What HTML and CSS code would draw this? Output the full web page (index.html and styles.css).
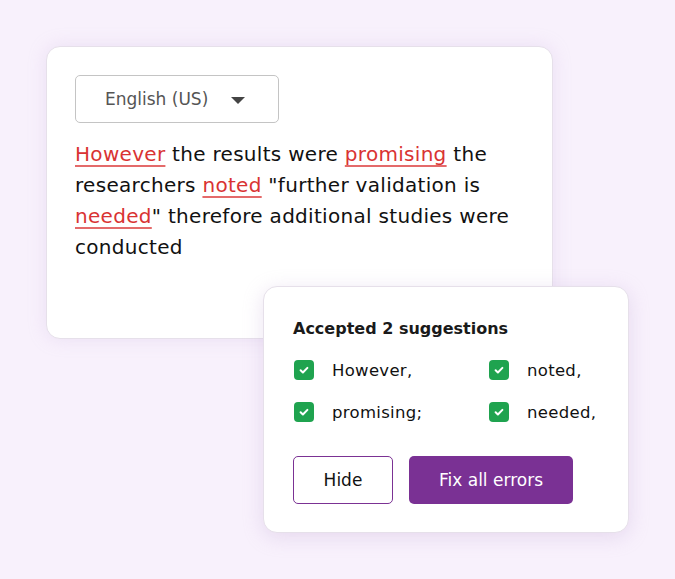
FILE: index.html
```html
<!DOCTYPE html>
<html>
<head>
<meta charset="utf-8">
<link rel="stylesheet" href="styles.css">
</head>
<body>
<div class="stage">
  <div class="editor">
    <div class="dropdown">
      <span class="lang">English (US)</span>
      <span class="caret"></span>
    </div>
    <p class="text"><span class="err">However</span> the results were <span class="err">promising</span> the researchers <span class="err">noted</span> "further validation is <span class="err">needed</span>" therefore additional studies were conducted</p>
  </div>
  <div class="panel">
    <div class="title">Accepted 2 suggestions</div>
    <div class="grid">
      <div class="item"><span class="check"><svg viewBox="0 0 20 20" width="20" height="20"><path d="M6.6 10.3 L8.9 12.5 L13.4 7.9" fill="none" stroke="#fff" stroke-width="2" stroke-linecap="round" stroke-linejoin="round"/></svg></span><span>However,</span></div>
      <div class="item"><span class="check"><svg viewBox="0 0 20 20" width="20" height="20"><path d="M6.6 10.3 L8.9 12.5 L13.4 7.9" fill="none" stroke="#fff" stroke-width="2" stroke-linecap="round" stroke-linejoin="round"/></svg></span><span>noted,</span></div>
      <div class="item"><span class="check"><svg viewBox="0 0 20 20" width="20" height="20"><path d="M6.6 10.3 L8.9 12.5 L13.4 7.9" fill="none" stroke="#fff" stroke-width="2" stroke-linecap="round" stroke-linejoin="round"/></svg></span><span>promising;</span></div>
      <div class="item"><span class="check"><svg viewBox="0 0 20 20" width="20" height="20"><path d="M6.6 10.3 L8.9 12.5 L13.4 7.9" fill="none" stroke="#fff" stroke-width="2" stroke-linecap="round" stroke-linejoin="round"/></svg></span><span>needed,</span></div>
    </div>
    <div class="buttons">
      <button class="btn hide">Hide</button>
      <button class="btn fix">Fix all errors</button>
    </div>
  </div>
</div>
</body>
</html>
```
FILE: styles.css
```css
* { box-sizing: border-box; }
html, body { margin: 0; padding: 0; }
body {
  width: 675px;
  height: 579px;
  background: #f8f1fc;
  font-family: "DejaVu Sans", "Open Sans", sans-serif;
  color: #111;
  overflow: hidden;
}
.stage {
  position: relative;
  padding: 46px 0 0 46px;
  height: 579px;
}
.editor {
  width: 507px;
  height: 293px;
  background: #fff;
  border: 1px solid #e6e0ea;
  border-radius: 14px;
  box-shadow: 0 0 18px rgba(200, 170, 220, 0.25);
  padding: 28px 28px 0 28px;
}
.dropdown {
  width: 204px;
  height: 48px;
  border: 1.5px solid #c4c4c4;
  border-radius: 5px;
  display: flex;
  align-items: center;
  padding-left: 29px;
}
.lang {
  font-size: 17px;
  color: #555;
}
.caret {
  margin-left: 23px;
  width: 0;
  height: 0;
  border-left: 7px solid transparent;
  border-right: 7px solid transparent;
  border-top: 7px solid #444;
  margin-top: 2px;
}
.text {
  margin: 16px 0 0 0;
  font-size: 20px;
  letter-spacing: 0.3px;
  line-height: 31px;
  color: #111;
  width: 455px;
}
.err {
  color: #d93333;
  text-decoration: underline;
  text-decoration-color: #e46a6a;
  text-decoration-thickness: 2px;
  text-underline-offset: 4px;
}
.panel {
  position: absolute;
  left: 263px;
  top: 286px;
  width: 366px;
  height: 247px;
  background: #fff;
  border: 1px solid #e6e0ea;
  border-radius: 14px;
  box-shadow: 0 4px 20px rgba(190, 160, 210, 0.3);
  padding: 30px 0 0 29px;
}
.title {
  font-size: 16px;
  font-weight: 600;
  line-height: 24px;
  color: #1a1a1a;
}
.grid {
  margin-top: 19px;
  display: grid;
  grid-template-columns: 195px auto;
  row-gap: 22px;
}
.item {
  display: flex;
  align-items: center;
  height: 20px;
  font-size: 16.5px;
  letter-spacing: 0.3px;
  color: #111;
}
.check {
  width: 20px;
  height: 20px;
  border-radius: 4px;
  background: #1fa34f;
  margin-left: 1px;
  margin-right: 18px;
  display: flex;
}
.buttons {
  margin-top: 34px;
  display: flex;
  gap: 16px;
}
.btn {
  height: 48px;
  border-radius: 5px;
  font-family: "DejaVu Sans", "Open Sans", sans-serif;
  font-size: 17px;
  cursor: pointer;
}
.hide {
  width: 100px;
  background: #fff;
  border: 1.5px solid #7b3294;
  color: #111;
}
.fix {
  width: 164px;
  background: #7a3194;
  border: none;
  color: #fff;
}
```
